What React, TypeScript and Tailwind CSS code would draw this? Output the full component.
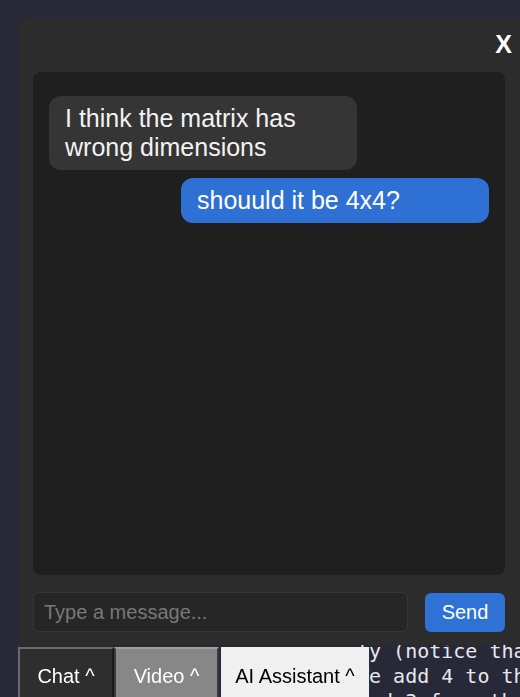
import { useState } from "react";

const codeLines = [
  "ly (notice that the",
  "We add 4 to the",
  "and 3 from the",
];

export default function App() {
  const [text, setText] = useState("");
  const messages = [
    { id: 1, mine: false, body: "I think the matrix has wrong dimensions" },
    { id: 2, mine: true, body: "shouuld it be 4x4?" },
  ];

  return (
    <div className="relative h-screen overflow-hidden bg-[#272838] font-['Liberation_Sans',Arial,sans-serif]">
      {/* page behind the widget */}
      <div className="pt-[639px] pl-[357px] font-['DejaVu_Sans_Mono',monospace] text-[20px] leading-[25px] text-[#e8e8e8] whitespace-pre">
        {codeLines.map((l) => (
          <div key={l}>{l}</div>
        ))}
      </div>

      {/* chat panel */}
      <div className="fixed left-[18px] top-[18px] w-[502px] h-[627px] rounded-tl-lg bg-[#2c2c2c] px-[15px] flex flex-col">
        <div className="h-[54px] flex items-center justify-end">
          <button className="text-white font-bold text-[25px] leading-none mr-[-7px] mt-[-2px]">X</button>
        </div>
        <div className="flex-1 rounded-lg bg-[#1f1f1f] px-4 pt-4 flex flex-col">
          {messages.map((m) => (
            <div
              key={m.id}
              className={
                m.mine
                  ? "self-end w-[70%] mt-2 rounded-xl bg-[#2f70d5] px-4 py-2 text-[25px] leading-[29px] text-white"
                  : "self-start w-[70%] mt-2 rounded-xl bg-[#353535] px-4 py-2 text-[25px] leading-[29px] text-[#f2f2f2]"
              }
            >
              {m.body}
            </div>
          ))}
        </div>
        <div className="flex items-center gap-[17px] pt-[17px] pb-[13px]">
          <input
            value={text}
            onChange={(e) => setText(e.target.value)}
            placeholder="Type a message..."
            className="w-[375px] h-[40px] rounded-md border border-[#363636] bg-[#262626] px-[10px] text-[20px] text-white placeholder:text-[#787878] outline-none"
          />
          <button className="w-[80px] h-[39px] rounded-md bg-[#2f72d6] text-white text-[20px]">Send</button>
        </div>
      </div>

      {/* bottom tabs */}
      <div className="fixed left-[18px] top-[647px] flex h-[60px] text-[20px]">
        <button className="w-[96px] h-full border-2 border-t-[#6b6b6b] border-l-[#6b6b6b] border-r-[#1a1a1a] border-b-[#1a1a1a] bg-[#2e2e2e] text-white pb-[2px]">
          Chat ^
        </button>
        <button className="w-[105px] h-full border-2 border-t-[#a0a0a0] border-l-[#3a3a3a] border-r-[#3a3a3a] border-b-[#3a3a3a] bg-[#878787] text-white pb-[2px]">
          Video ^
        </button>
        <button className="ml-[2px] w-[148px] h-full bg-[#f0f0f0] text-black pb-[2px]">
          AI Assistant ^
        </button>
      </div>
    </div>
  );
}
